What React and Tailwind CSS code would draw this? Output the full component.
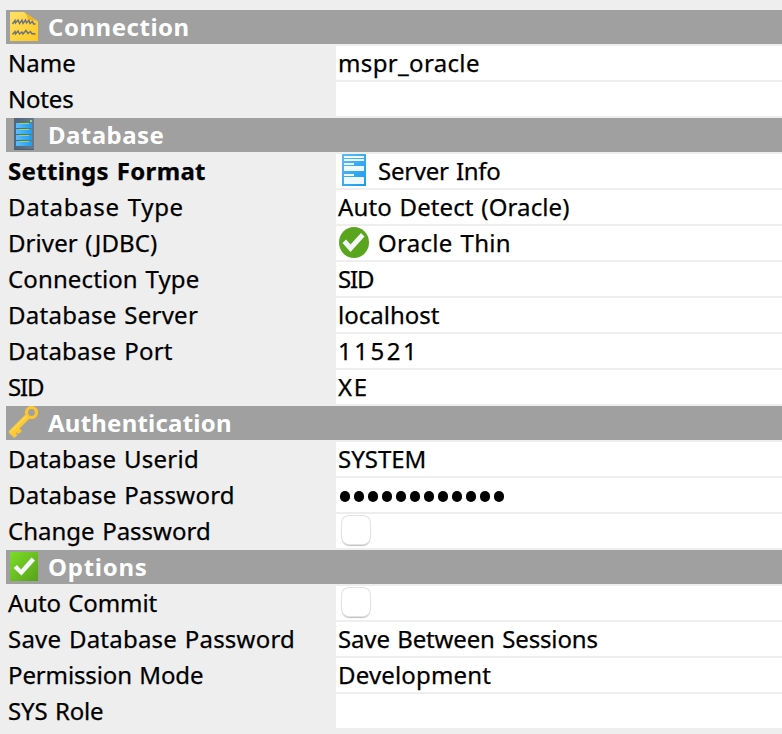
const NoteIcon = () => (
  <svg width="30" height="32" viewBox="0 -1 30 32">
    <defs>
      <linearGradient id="note" x1="0" y1="0" x2="1" y2="1">
        <stop offset="0" stopColor="#ffe066" />
        <stop offset="1" stopColor="#ffc81e" />
      </linearGradient>
    </defs>
    <path d="M2 1H16L30 10.500V30H2Z" fill="url(#note)" />
    <path d="M16 1L30 10.500C26 8.500 23 8.500 19.500 10C20 6 18.500 3 16 1Z" fill="#eeb51c" />
    <path d="M4.500 13L7 9.500L7.500 12L10 9L11.500 12.500L14 9L15 12.500L17.500 9L18.500 12L21 9.500L22 12.500L24.500 10.500L25.500 13H27.500" fill="none" stroke="#66717f" strokeWidth="1.400" />
    <path d="M4.500 23.500L7 20.500L7.500 23L10 20L11.500 23L14 21L15 23L18 19.500L20 22.500L22.500 20.500L24 23L26 22.500L27.500 23.500" fill="none" stroke="#66717f" strokeWidth="1.400" />
  </svg>
);

const ServerIcon = () => (
  <svg width="30" height="32" viewBox="0 0 30 32">
    <defs>
      <linearGradient id="rack" x1="0" y1="0" x2="1" y2="0">
        <stop offset="0" stopColor="#5cbcff" />
        <stop offset="1" stopColor="#1e9df0" />
      </linearGradient>
      <linearGradient id="tower" x1="0" y1="0" x2="1" y2="0">
        <stop offset="0" stopColor="#4e6478" />
        <stop offset="1" stopColor="#687889" />
      </linearGradient>
    </defs>
    <path d="M6 0H26V32H6Z" fill="url(#tower)" />
    <path d="M6 31H26V32H6Z" fill="#4b5d70" />
    <path d="M22 2H24V4H22Z" fill="#8ee05a" />
    {[5, 11, 17, 23].map((y) => (
      <g key={y}>
        <rect x="8" y={y} width="16" height="5" fill="url(#rack)" />
        <rect x="11" y={y} width="10" height="1" fill="#8fe04e" />
      </g>
    ))}
  </svg>
);

const KeyIcon = () => (
  <svg width="30" height="32" viewBox="0 0 30 32">
    <defs>
      <linearGradient id="key" x1="0" y1="0" x2="1" y2="1">
        <stop offset="0" stopColor="#ffdc59" />
        <stop offset="1" stopColor="#fbb80f" />
      </linearGradient>
    </defs>
    <circle cx="23.500" cy="6.500" r="5" fill="none" stroke="#fdc52f" strokeWidth="3.200" />
    <path d="M17.500 8.500L21.500 12.500L11.500 22.500L14 25L10.500 28L8.500 26.500L7.800 27.200L9.500 29L6.500 32L1 27V25Z" fill="url(#key)" />
    <path d="M18.500 10.500L4 25" stroke="#ffe07a" strokeWidth="0.900" />
  </svg>
);

const OptionsIcon = () => (
  <svg width="30" height="32" viewBox="0 0 30 32">
    <defs>
      <linearGradient id="opt" x1="0" y1="0" x2="1" y2="1">
        <stop offset="0" stopColor="#7bdd25" />
        <stop offset="1" stopColor="#58a11c" />
      </linearGradient>
    </defs>
    <rect x="2" y="2" width="28" height="29" fill="url(#opt)" />
    <path d="M5.500 18L9 15L13 19.500L23.500 7.500L27 10.500L13.500 25.500Z" fill="#f5f8fb" />
  </svg>
);

const FormIcon = () => (
  <svg width="24" height="32" viewBox="0 0 24 32">
    <defs>
      <linearGradient id="form" x1="0" y1="0" x2="1" y2="1">
        <stop offset="0" stopColor="#58bdfa" />
        <stop offset="1" stopColor="#1a9bea" />
      </linearGradient>
    </defs>
    <rect width="24" height="32" fill="url(#form)" />
    <path d="M2 2H22V4H2ZM2 5H22V7H2ZM2 9H12V11H2ZM2 12H22V17H2ZM2 20H12V22H2ZM2 23H22V30H2Z" fill="#eff8ff" />
  </svg>
);

const DriverIcon = () => (
  <svg width="32" height="32" viewBox="0 0 32 32">
    <ellipse cx="16" cy="16.500" rx="15" ry="15.500" fill="#5aa51e" />
    <path d="M4.500 17L8 13.500L12.500 18.500L23 7L26.500 10.500L12.500 26Z" fill="#f4f7fa" />
  </svg>
);

const Header = ({ icon, title, track }) => (
  <div className="flex h-[34px] bg-[#a0a0a0] pl-0.5 font-bold text-white">
    <span className="w-10 shrink-0">{icon}</span>
    <span className={track}>{title}</span>
  </div>
);

const Row = ({ label, track = "", value, valueTrack = "", icon, children }) => (
  <div className="flex h-[34px] [-webkit-text-stroke:0.25px_black] [word-spacing:1.3px]">
    <div className={`w-[330px] shrink-0 pl-0.5 ${track}`}>{label}</div>
    <div className="flex flex-1 bg-white pl-0.5">
      {icon && <span className="w-10 shrink-0">{icon}</span>}
      {value && <span className={valueTrack}>{value}</span>}
      {children}
    </div>
  </div>
);

const Checkbox = () => (
  <div className="ml-1 mt-0.5 size-7 rounded-[7px] bg-white shadow-[0_0_0_1px_#e2e2e2,0_2px_1px_#c0c0c0]" />
);

const Password = () => (
  <div className="flex items-center gap-1 pl-0.5 pt-0.5">
    {Array.from({ length: 12 }, (_, i) => (
      <span key={i} className="h-[11px] w-2.5 rounded-full bg-black" />
    ))}
  </div>
);

export default function App() {
  return (
    <main className="flex h-[734px] w-[782px] flex-col gap-0.5 overflow-hidden whitespace-nowrap bg-[#eeeeee] pl-1.5 pt-2.5 font-['Noto_Sans',sans-serif] text-[24px] leading-[34px] text-black [&_svg]:block">
      <Header icon={<NoteIcon />} title="Connection" track="tracking-[0.52px]" />
      <Row label="Name" value="mspr_oracle" valueTrack="tracking-[0.35px]" />
      <Row label="Notes" track="tracking-[-0.2px]" />
      <Header icon={<ServerIcon />} title="Database" track="tracking-[0.45px]" />
      <Row label={<b>Settings Format</b>} track="tracking-[0.32px]" icon={<span className="ml-1 block"><FormIcon /></span>} value="Server Info" valueTrack="tracking-[-0.27px]" />
      <Row label="Database Type" track="tracking-[0.65px]" value="Auto Detect (Oracle)" valueTrack="tracking-[0.12px]" />
      <Row label="Driver (JDBC)" track="tracking-[0.08px]" icon={<DriverIcon />} value="Oracle Thin" valueTrack="tracking-[0.3px]" />
      <Row label="Connection Type" track="tracking-[0.12px]" value="SID" valueTrack="tracking-[-1.2px]" />
      <Row label="Database Server" track="tracking-[0.26px]" value="localhost" />
      <Row label="Database Port" track="tracking-[0.25px]" value="11521" valueTrack="tracking-[2.5px]" />
      <Row label="SID" track="tracking-[-1.2px]" value="XE" valueTrack="tracking-[1.8px]" />
      <Header icon={<KeyIcon />} title="Authentication" track="tracking-[0.22px]" />
      <Row label="Database Userid" track="tracking-[0.24px]" value="SYSTEM" />
      <Row label="Database Password" track="tracking-[0.26px]"><Password /></Row>
      <Row label="Change Password"><Checkbox /></Row>
      <Header icon={<OptionsIcon />} title="Options" track="tracking-[0.75px]" />
      <Row label="Auto Commit" track="tracking-[-0.12px]"><Checkbox /></Row>
      <Row label="Save Database Password" track="tracking-[0.21px]" value="Save Between Sessions" valueTrack="tracking-[-0.14px]" />
      <Row label="Permission Mode" track="tracking-[-0.13px]" value="Development" valueTrack="tracking-[0.16px]" />
      <Row label="SYS Role" track="tracking-[-0.15px]" />
    </main>
  );
}
